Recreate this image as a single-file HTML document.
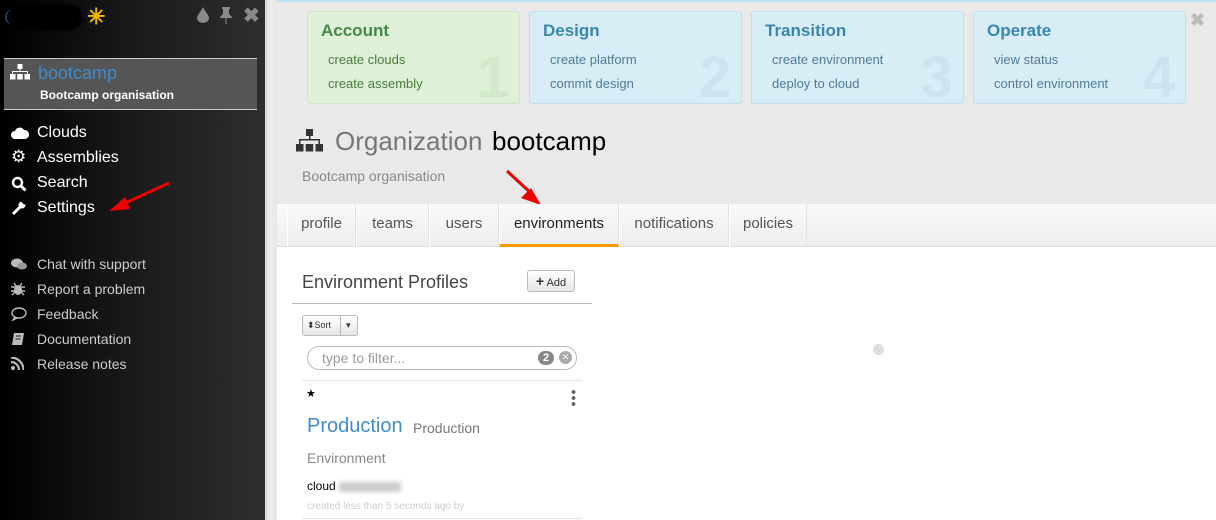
<!DOCTYPE html>
<html><head><meta charset="utf-8"><style>
*{box-sizing:border-box;margin:0;padding:0}
body{width:1216px;height:520px;overflow:hidden;font-family:"Liberation Sans",Arial,sans-serif;background:#fff;position:relative}
.side{position:absolute;left:0;top:0;width:265px;height:520px;background:linear-gradient(90deg,#000 0%,#1a1a1a 50%,#2e2e2e 100%);color:#fff}
.gut{position:absolute;left:265px;top:0;width:12px;height:520px;background:linear-gradient(90deg,#d8d8d8,#eee 40%,#e6e6e6)}
.main{position:absolute;left:277px;top:0;right:0;height:204px;background:#e9e9e9;border-top:2px solid #bde3ef}
.abs{position:absolute}
.card{position:absolute;top:9px;width:213px;height:93px;border:1px solid #bfe1ef;background:#d9edf7;border-radius:3px;overflow:hidden}
.card h3{position:absolute;left:13px;top:9px;font-size:17px;color:#3a87ad;font-weight:bold}
.card p{position:absolute;left:20px;font-size:13px;color:#4f7b98}
.card .n{position:absolute;right:10px;top:32px;font-size:58px;font-weight:bold;color:#cde4f0}
.card.g{background:#dff0d8;border-color:#cfe6c4}
.card.g h3{color:#468847}.card.g p{color:#4a7b3a}.card.g .n{color:#d2e9ca}
.tabs{position:absolute;left:277px;top:204px;right:0;height:43px;background:linear-gradient(#fafafa,#eee);border-bottom:1px solid #ddd}
.tab{position:absolute;top:0;height:43px;line-height:40px;font-size:15px;color:#555;text-align:center;border-right:1px solid #e2e2e2;border-left:1px solid #fff}
.nav{position:absolute;left:37px;font-size:16px;color:#fff}
.nav2{position:absolute;left:37px;font-size:14px;color:#ccc}
.ic{position:absolute;left:11px}
</style></head><body>
<div class="side">
  <div class="abs" style="left:6px;top:5px;width:76px;height:24px;border-radius:12px;background:#000;box-shadow:0 0 6px #000"></div>
  <div class="abs" style="left:5px;top:9px;width:8px;height:16px;border-left:2px solid #1d3e66;border-radius:8px 0 0 8px"></div>
  <div class="abs" style="left:87px;top:4px;color:#f5b800;font-size:22px;font-weight:bold">✳</div>
  <svg class="abs" style="left:197px;top:7px" width="12" height="16" viewBox="0 0 12 16"><path d="M6 0C4 5 0 8 0 11a6 5 0 0 0 12 0C12 8 8 5 6 0z" fill="#8a8a8a"/></svg>
  <svg class="abs" style="left:218px;top:6px" width="16" height="18" viewBox="0 0 16 18"><path d="M4 1h8v2h-1v5l3 3v1H2v-1l3-3V3H4z M7.5 12h1v6h-1z" fill="#8a8a8a"/></svg>
  <div class="abs" style="left:243px;top:3px;color:#8a8a8a;font-size:20px;font-weight:bold">✖</div>
  <div class="abs" style="left:4px;top:58px;width:253px;height:52px;background:#555;border-top:1px solid #ccc;border-bottom:1px solid #ccc"></div>
  <svg class="abs" style="left:10px;top:64px" width="20" height="16" viewBox="0 0 20 16"><rect x="7.5" y="0" width="5" height="5" fill="#fff"/><rect x="9.5" y="5" width="1" height="3" fill="#fff"/><rect x="2" y="7" width="16" height="1" fill="#fff"/><rect x="2" y="7" width="1" height="3" fill="#fff"/><rect x="17" y="7" width="1" height="3" fill="#fff"/><rect x="0" y="10" width="5.5" height="5.5" fill="#fff"/><rect x="7.2" y="10" width="5.5" height="5.5" fill="#fff"/><rect x="14.5" y="10" width="5.5" height="5.5" fill="#fff"/></svg>
  <div class="abs" style="left:38px;top:63px;font-size:18px;color:#428bca">bootcamp</div>
  <div class="abs" style="left:40px;top:88px;font-size:12px;font-weight:bold;color:#fff">Bootcamp organisation</div>
  <svg class="ic" style="top:127px" width="18" height="12" viewBox="0 0 18 12"><path d="M4 12a4 4 0 0 1 0-8 5 5 0 0 1 9-1 4.5 4.5 0 0 1 1 9z" fill="#fff"/></svg><div class="nav" style="top:124px">Clouds</div>
  <div class="ic" style="top:147px;font-size:17px">⚙</div><div class="nav" style="top:149px">Assemblies</div>
  <svg class="ic" style="top:176px" width="16" height="16" viewBox="0 0 16 16"><circle cx="6.5" cy="6.5" r="4.5" stroke="#fff" stroke-width="2.4" fill="none"/><path d="M10 10l4.5 4.5" stroke="#fff" stroke-width="3"/></svg><div class="nav" style="top:174px">Search</div>
  <svg class="ic" style="top:200px" width="16" height="16" viewBox="0 0 16 16"><path d="M2 14l7-7" stroke="#fff" stroke-width="3"/><circle cx="11" cy="5" r="3.5" fill="#fff"/><path d="M11 1l3 3" stroke="#000" stroke-width="2"/></svg><div class="nav" style="top:199px">Settings</div>
  <svg class="abs" style="left:105px;top:180px" width="70" height="35" viewBox="0 0 70 35"><path d="M64 3L16 25" stroke="#e00" stroke-width="3"/><path d="M4 31L20 17 25 29z" fill="#e00"/></svg>
  <svg class="ic" style="top:258px" width="16" height="13" viewBox="0 0 16 13"><ellipse cx="6" cy="5" rx="6" ry="4.5" fill="#bbb"/><ellipse cx="11" cy="8" rx="5" ry="3.5" fill="#999"/></svg><div class="nav2" style="top:256px">Chat with support</div>
  <svg class="ic" style="top:282px" width="14" height="14" viewBox="0 0 14 14"><ellipse cx="7" cy="8" rx="4" ry="5" fill="#bbb"/><path d="M0 5h14M0 9h14M1 13l3-3M13 13l-3-3M3 1l2 3M11 1l-2 3" stroke="#bbb" stroke-width="1.4"/></svg><div class="nav2" style="top:281px">Report a problem</div>
  <svg class="ic" style="top:307px" width="16" height="14" viewBox="0 0 16 14"><ellipse cx="8" cy="6" rx="7" ry="5" stroke="#bbb" stroke-width="1.4" fill="none"/><path d="M4 10l-2 3 4-2" stroke="#bbb" stroke-width="1.4" fill="none"/></svg><div class="nav2" style="top:306px">Feedback</div>
  <svg class="ic" style="top:332px" width="14" height="14" viewBox="0 0 14 14"><path d="M3 1h10l-2 12H1z" fill="#bbb"/><path d="M5 4h5M4.5 7h5" stroke="#222" stroke-width="1"/></svg><div class="nav2" style="top:331px">Documentation</div>
  <svg class="ic" style="top:357px" width="13" height="13" viewBox="0 0 13 13"><circle cx="2" cy="11" r="2" fill="#bbb"/><path d="M0 5a8 8 0 0 1 8 8M0 0.5a12.5 12.5 0 0 1 12.5 12.5" stroke="#bbb" stroke-width="2.2" fill="none"/></svg><div class="nav2" style="top:356px">Release notes</div>
</div>
<div class="gut"></div>
<div class="main">
  <div class="card g" style="left:30px"><h3>Account</h3><p style="top:40px">create clouds</p><p style="top:64px">create assembly</p><div class="n">1</div></div>
  <div class="card" style="left:252px"><h3>Design</h3><p style="top:40px">create platform</p><p style="top:64px">commit design</p><div class="n">2</div></div>
  <div class="card" style="left:474px"><h3>Transition</h3><p style="top:40px">create environment</p><p style="top:64px">deploy to cloud</p><div class="n">3</div></div>
  <div class="card" style="left:696px"><h3>Operate</h3><p style="top:40px">view status</p><p style="top:64px">control environment</p><div class="n">4</div></div>
  <div class="abs" style="left:913px;top:8px;font-size:18px;color:#bbb;font-weight:bold">✖</div>
  <svg class="abs" style="left:19px;top:127px" width="27" height="24" viewBox="0 0 27 24"><rect x="10" y="0" width="7" height="7" fill="#333"/><rect x="13" y="7" width="1.5" height="4" fill="#333"/><rect x="3" y="10" width="21" height="1.5" fill="#333"/><rect x="3" y="10" width="1.5" height="5" fill="#333"/><rect x="22.5" y="10" width="1.5" height="5" fill="#333"/><rect x="0" y="15" width="7.5" height="7.5" fill="#333"/><rect x="9.7" y="15" width="7.5" height="7.5" fill="#333"/><rect x="19.5" y="15" width="7.5" height="7.5" fill="#333"/></svg>
  <div class="abs" style="left:58px;top:124px;font-size:26px;color:#777">Organization</div>
  <div class="abs" style="left:215px;top:124px;font-size:26px;color:#000">bootcamp</div>
  <div class="abs" style="left:25px;top:166px;font-size:14px;color:#888">Bootcamp organisation</div>
  <svg class="abs" style="left:222px;top:166px" width="50" height="44" viewBox="0 0 50 44"><path d="M8 3l26 24" stroke="#e00" stroke-width="3"/><path d="M42 37L22 30 32 20z" fill="#e00"/></svg>
</div>
<div class="tabs">
  <div class="tab" style="left:10px;width:69px">profile</div>
  <div class="tab" style="left:79px;width:73px">teams</div>
  <div class="tab" style="left:152px;width:70px">users</div>
  <div class="tab" style="left:222px;width:120px;color:#222;border-bottom:3px solid #f90">environments</div>
  <div class="tab" style="left:342px;width:110px">notifications</div>
  <div class="tab" style="left:452px;width:78px">policies</div>
</div>
<div class="abs" style="left:302px;top:272px;font-size:18px;color:#444">Environment Profiles</div>
<div class="abs" style="left:527px;top:270px;width:48px;height:22px;border:1px solid #bbb;border-radius:3px;background:linear-gradient(#fff,#e6e6e6);font-size:11px;line-height:20px;text-align:center;color:#333"><b style="font-size:14px">+</b> Add</div>
<div class="abs" style="left:292px;top:303px;width:300px;height:1px;background:#bbb"></div>
<div class="abs" style="left:302px;top:315px;width:56px;height:21px;border:1px solid #bbb;border-radius:3px;background:linear-gradient(#fff,#e6e6e6);font-size:9px;line-height:19px;color:#333"><span style="padding-left:4px">⬍Sort</span><span style="position:absolute;left:37px;top:0;height:19px;border-left:1px solid #bbb;padding-left:5px">▾</span></div>
<div class="abs" style="left:307px;top:346px;width:270px;height:24px;border:1px solid #bbb;border-radius:12px;font-size:14px;line-height:22px;color:#999;padding-left:14px">type to filter...</div>
<div class="abs" style="left:538px;top:351px;width:16px;height:14px;border-radius:7px;background:#888;color:#fff;font-size:11px;font-weight:bold;text-align:center;line-height:14px">2</div>
<div class="abs" style="left:559px;top:351px;width:13px;height:13px;border-radius:7px;background:#aaa;color:#fff;font-size:9px;text-align:center;line-height:13px">✕</div>
<div class="abs" style="left:302px;top:380px;width:280px;height:1px;background:#e5e5e5"></div>
<div class="abs" style="left:306px;top:387px;font-size:11px;color:#000">★</div>
<div class="abs" style="left:571px;top:389px;width:5px;height:17px;background:radial-gradient(circle,#666 1.8px,transparent 2px) 0 0/5px 6px"></div>
<div class="abs" style="left:307px;top:415px;font-size:20px;color:#428bca">Production</div>
<div class="abs" style="left:413px;top:420px;font-size:14px;color:#777">Production</div>
<div class="abs" style="left:307px;top:450px;font-size:14px;color:#888">Environment</div>
<div class="abs" style="left:307px;top:479px;font-size:12px;color:#000">cloud <span style="display:inline-block;width:62px;height:10px;background:#ccc;filter:blur(2px);vertical-align:middle"></span></div>
<div class="abs" style="left:307px;top:501px;font-size:10px;color:#ccc">created less than 5 seconds ago by</div>
<div class="abs" style="left:302px;top:518px;width:280px;height:1px;background:#e5e5e5"></div>
<div class="abs" style="left:873px;top:344px;width:11px;height:11px;border-radius:6px;background:#ddd"></div>
</body></html>
